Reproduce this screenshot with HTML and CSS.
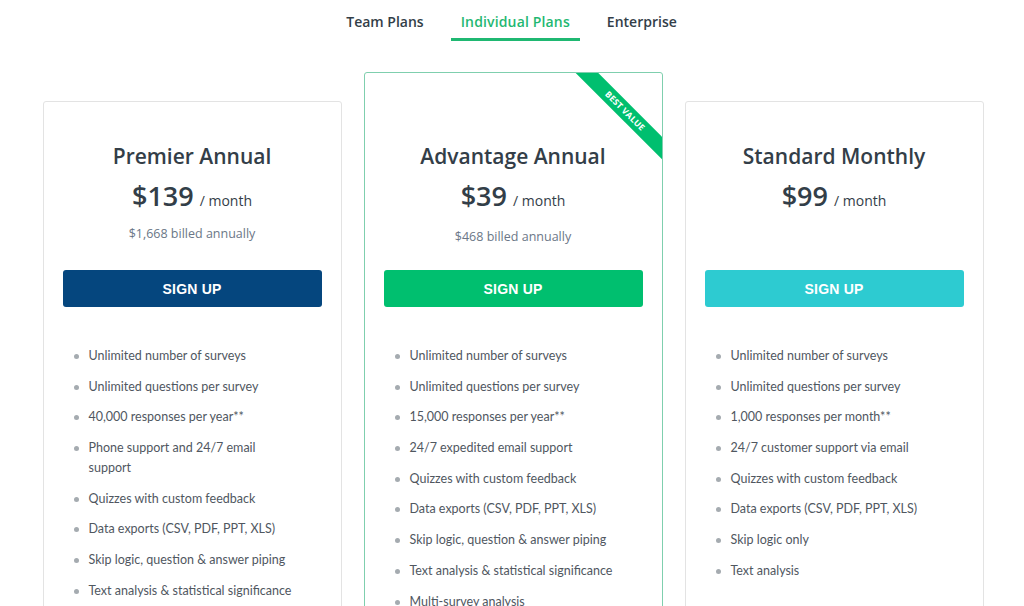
FILE: index.html
```html
<!DOCTYPE html>
<html lang="en">
<head>
<meta charset="utf-8">
<title>Plans &amp; Pricing</title>
<link rel="stylesheet" href="styles.css">
</head>
<body>
<nav class="tabs">
  <a class="tab">Team Plans</a>
  <a class="tab active">Individual Plans</a>
  <a class="tab">Enterprise</a>
</nav>
<main class="plans">
  <section class="card">
    <h2 class="title">Premier Annual</h2>
    <div class="price"><span class="amount">$139</span><span class="per">/ month</span></div>
    <div class="billed">$1,668 billed annually</div>
    <button class="btn btn-navy">SIGN UP</button>
    <ul class="features">
      <li>Unlimited number of surveys</li>
      <li>Unlimited questions per survey</li>
      <li>40,000 responses per year**</li>
      <li>Phone support and 24/7 email support</li>
      <li>Quizzes with custom feedback</li>
      <li>Data exports (CSV, PDF, PPT, XLS)</li>
      <li>Skip logic, question &amp; answer piping</li>
      <li>Text analysis &amp; statistical significance</li>
    </ul>
  </section>
  <section class="card featured">
    <div class="ribbon"><span>BEST VALUE</span></div>
    <h2 class="title">Advantage Annual</h2>
    <div class="price"><span class="amount">$39</span><span class="per">/ month</span></div>
    <div class="billed">$468 billed annually</div>
    <button class="btn btn-green">SIGN UP</button>
    <ul class="features">
      <li>Unlimited number of surveys</li>
      <li>Unlimited questions per survey</li>
      <li>15,000 responses per year**</li>
      <li>24/7 expedited email support</li>
      <li>Quizzes with custom feedback</li>
      <li>Data exports (CSV, PDF, PPT, XLS)</li>
      <li>Skip logic, question &amp; answer piping</li>
      <li>Text analysis &amp; statistical significance</li>
      <li>Multi-survey analysis</li>
    </ul>
  </section>
  <section class="card">
    <h2 class="title">Standard Monthly</h2>
    <div class="price"><span class="amount">$99</span><span class="per">/ month</span></div>
    <div class="billed"></div>
    <button class="btn btn-teal">SIGN UP</button>
    <ul class="features">
      <li>Unlimited number of surveys</li>
      <li>Unlimited questions per survey</li>
      <li>1,000 responses per month**</li>
      <li>24/7 customer support via email</li>
      <li>Quizzes with custom feedback</li>
      <li>Data exports (CSV, PDF, PPT, XLS)</li>
      <li>Skip logic only</li>
      <li>Text analysis</li>
    </ul>
  </section>
</main>
</body>
</html>
```
FILE: styles.css
```css
* { box-sizing: border-box; }
html, body { margin: 0; padding: 0; background: #fff; }
body {
  font-family: "Open Sans", "Liberation Sans", sans-serif;
  color: #333e48;
  overflow: hidden;
  height: 606px;
}
.tabs {
  display: flex;
  justify-content: center;
  gap: 18px;
  padding-top: 10px;
  padding-right: 1px;
}
.tab {
  display: block;
  padding: 0 9px;
  font-size: 14px;
  font-weight: 600;
  line-height: 24px;
  height: 31px;
  color: #333e48;
  border-bottom: 3px solid transparent;
  cursor: pointer;
}
.tab.active {
  color: #1fb872;
  border-bottom-color: #1fb872;
  padding: 0 10px;
  letter-spacing: 0.15px;
}
.plans {
  display: flex;
  justify-content: center;
  align-items: flex-start;
  gap: 22px;
  margin-top: 31px;
  padding-left: 2px;
}
.card {
  position: relative;
  width: 299px;
  border: 1px solid #e3e3e3;
  border-radius: 3px;
  padding: 39px 19px 0;
  margin-top: 29px;
  display: flex;
  flex-direction: column;
  align-items: center;
  min-height: 560px;
}
.card.featured {
  margin-top: 0;
  border-color: #7fcfae;
  padding-top: 68px;
  overflow: hidden;
}
.title {
  margin: 0;
  font-size: 21px;
  font-weight: 600;
  line-height: 30px;
  color: #333e48;
}
.price {
  margin-top: 5px;
  display: flex;
  align-items: baseline;
  gap: 6px;
  height: 40px;
}
.amount {
  font-size: 27px;
  font-weight: 600;
  line-height: 40px;
  color: #333e48;
}
.per {
  font-size: 14px;
  color: #333e48;
}
.billed {
  margin-top: 8px;
  height: 20px;
  font-size: 12.5px;
  line-height: 20px;
  color: #6b7787;
}
.featured .billed { margin-top: 11px; }
.btn {
  margin-top: 26px;
  width: 100%;
  height: 37px;
  border: 0;
  border-radius: 3px;
  color: #fff;
  font-family: "Liberation Sans", Arial, sans-serif;
  font-size: 14px;
  font-weight: 700;
  letter-spacing: 0.2px;
  cursor: pointer;
}
.featured .btn { margin-top: 23px; }
.btn-navy { background: #05467e; }
.btn-green { background: #00bf6f; }
.btn-teal { background: #2dcbd1; }
.features {
  list-style: none;
  margin: 39px 0 0;
  padding: 0 0 0 26px;
  width: 100%;
  font-family: Lato, "Open Sans", sans-serif;
}
.features li {
  position: relative;
  max-width: 212px;
  font-size: 12.5px;
  line-height: 20px;
  color: #50575f;
  margin-bottom: 10.7px;
}
.features li::before {
  content: "";
  position: absolute;
  left: -15px;
  top: 8px;
  width: 5px;
  height: 5px;
  border-radius: 50%;
  background: #a5abb0;
}
.ribbon {
  position: absolute;
  top: 0;
  right: 0;
  width: 90px;
  height: 90px;
  overflow: hidden;
}
.ribbon span {
  position: absolute;
  left: -17px;
  top: 30px;
  width: 140px;
  height: 16px;
  transform: rotate(45deg);
  background: #00bf6f;
  color: #fff;
  font-size: 8.5px;
  font-weight: 700;
  line-height: 16px;
  text-align: center;
  letter-spacing: 0.2px;
}
```
